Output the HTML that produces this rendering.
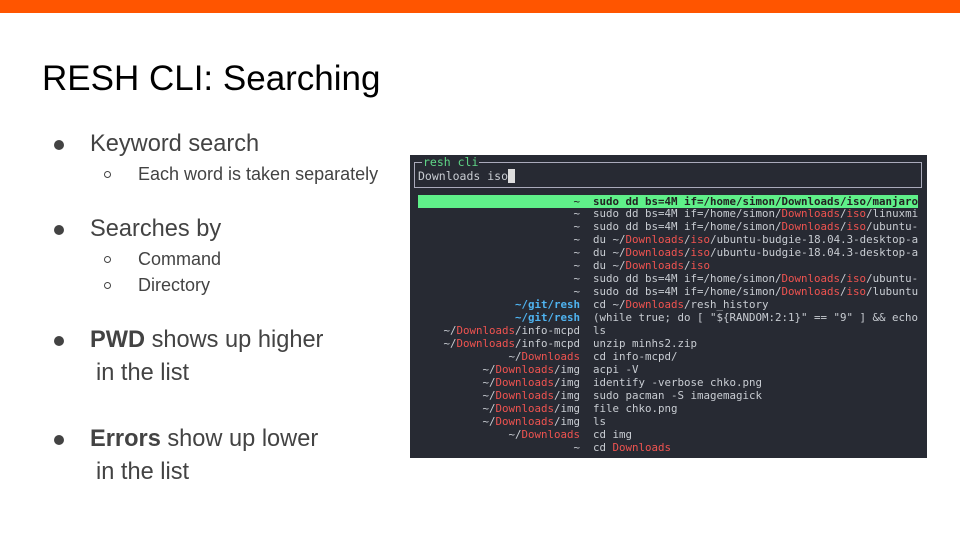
<!DOCTYPE html>
<html><head><meta charset="utf-8"><style>
body{margin:0;width:960px;height:540px;background:#fff;position:relative;overflow:hidden;font-family:"Liberation Sans",Arial,sans-serif;color:#434343}
.bar{position:absolute;left:0;top:0;width:960px;height:13px;background:#ff5500}
.t{position:absolute;white-space:nowrap}
.h1{left:42px;top:59px;font-size:35px;color:#000}
.b1{font-size:23.6px}
.b2{font-size:18px}
.dot{position:absolute;width:10px;height:10px;border-radius:50%;background:#434343}
.circ{position:absolute;width:7px;height:7px;border-radius:50%;border:1px solid #434343;box-sizing:border-box}
.term{position:absolute;left:410px;top:155px;width:517px;height:303px;background:#272a33;font-family:"DejaVu Sans Mono","Liberation Mono",monospace;font-size:10.8px;color:#c8ccd2}
.box{position:absolute;left:4px;top:7px;width:508px;height:26px;border:1px solid #aab;box-sizing:border-box}
.ttl{position:absolute;left:12px;top:0px;background:#272a33;color:#5fd787;padding:0 1px;line-height:14px;font-size:11.5px}
.row{position:absolute;left:8px;width:500px;height:13px;line-height:13px}
.l{position:absolute;right:338px;text-align:right;white-space:pre}
.r{position:absolute;left:175px;white-space:pre}
.sel{background:#5ff089;color:#222}
.d{color:#ef5350}.g{color:#4fb3f0;font-weight:bold}.dk{font-weight:bold}
</style></head><body>
<div class="bar"></div>
<div class="t h1">RESH CLI: Searching</div>
<div class="dot" style="left:54px;top:140px"></div><div class="t b1" style="left:90px;top:131px">Keyword search</div>
<div class="circ" style="left:104px;top:171px"></div><div class="t b2" style="left:138px;top:164px">Each word is taken separately</div>
<div class="dot" style="left:54px;top:225px"></div><div class="t b1" style="left:90px;top:216px">Searches by</div>
<div class="circ" style="left:104px;top:256px"></div><div class="t b2" style="left:138px;top:249px">Command</div>
<div class="circ" style="left:104px;top:282px"></div><div class="t b2" style="left:138px;top:275px">Directory</div>
<div class="dot" style="left:54px;top:336px"></div><div class="t b1" style="left:90px;top:327px"><b>PWD</b> shows up higher</div>
<div class="t b1" style="left:96px;top:360px">in the list</div>
<div class="dot" style="left:54px;top:435px"></div><div class="t b1" style="left:90px;top:426px"><b>Errors</b> show up lower</div>
<div class="t b1" style="left:96px;top:459px">in the list</div>

<div class="term">
<div class="box"></div>
<div class="ttl">resh cli</div>
<div class="t" style="left:8px;top:14px;line-height:14px;font-size:11.5px">Downloads iso<span style="background:#ddd;color:#ddd">_</span></div>
<div class="row sel" style="top:40px"><span class="l">~</span><span class="r dk">sudo dd bs=4M if=/home/simon/Downloads/iso/manjaro</span></div>
<div class="row" style="top:52px"><span class="l">~</span><span class="r">sudo dd bs=4M if=/home/simon/<span class="d">Downloads</span>/<span class="d">iso</span>/linuxmi</span></div>
<div class="row" style="top:65px"><span class="l">~</span><span class="r">sudo dd bs=4M if=/home/simon/<span class="d">Downloads</span>/<span class="d">iso</span>/ubuntu-</span></div>
<div class="row" style="top:78px"><span class="l">~</span><span class="r">du ~/<span class="d">Downloads</span>/<span class="d">iso</span>/ubuntu-budgie-18.04.3-desktop-a</span></div>
<div class="row" style="top:91px"><span class="l">~</span><span class="r">du ~/<span class="d">Downloads</span>/<span class="d">iso</span>/ubuntu-budgie-18.04.3-desktop-a</span></div>
<div class="row" style="top:104px"><span class="l">~</span><span class="r">du ~/<span class="d">Downloads</span>/<span class="d">iso</span></span></div>
<div class="row" style="top:117px"><span class="l">~</span><span class="r">sudo dd bs=4M if=/home/simon/<span class="d">Downloads</span>/<span class="d">iso</span>/ubuntu-</span></div>
<div class="row" style="top:130px"><span class="l">~</span><span class="r">sudo dd bs=4M if=/home/simon/<span class="d">Downloads</span>/<span class="d">iso</span>/lubuntu</span></div>
<div class="row" style="top:143px"><span class="l g">~/git/resh</span><span class="r">cd ~/<span class="d">Downloads</span>/resh_history</span></div>
<div class="row" style="top:156px"><span class="l g">~/git/resh</span><span class="r">(while true; do [ "${RANDOM:2:1}" == "9" ] &amp;&amp; echo</span></div>
<div class="row" style="top:169px"><span class="l">~/<span class="d">Downloads</span>/info-mcpd</span><span class="r">ls</span></div>
<div class="row" style="top:182px"><span class="l">~/<span class="d">Downloads</span>/info-mcpd</span><span class="r">unzip minhs2.zip</span></div>
<div class="row" style="top:195px"><span class="l">~/<span class="d">Downloads</span></span><span class="r">cd info-mcpd/</span></div>
<div class="row" style="top:208px"><span class="l">~/<span class="d">Downloads</span>/img</span><span class="r">acpi -V</span></div>
<div class="row" style="top:221px"><span class="l">~/<span class="d">Downloads</span>/img</span><span class="r">identify -verbose chko.png</span></div>
<div class="row" style="top:234px"><span class="l">~/<span class="d">Downloads</span>/img</span><span class="r">sudo pacman -S imagemagick</span></div>
<div class="row" style="top:247px"><span class="l">~/<span class="d">Downloads</span>/img</span><span class="r">file chko.png</span></div>
<div class="row" style="top:260px"><span class="l">~/<span class="d">Downloads</span>/img</span><span class="r">ls</span></div>
<div class="row" style="top:273px"><span class="l">~/<span class="d">Downloads</span></span><span class="r">cd img</span></div>
<div class="row" style="top:286px"><span class="l">~</span><span class="r">cd <span class="d">Downloads</span></span></div>
</div>
</body></html>
